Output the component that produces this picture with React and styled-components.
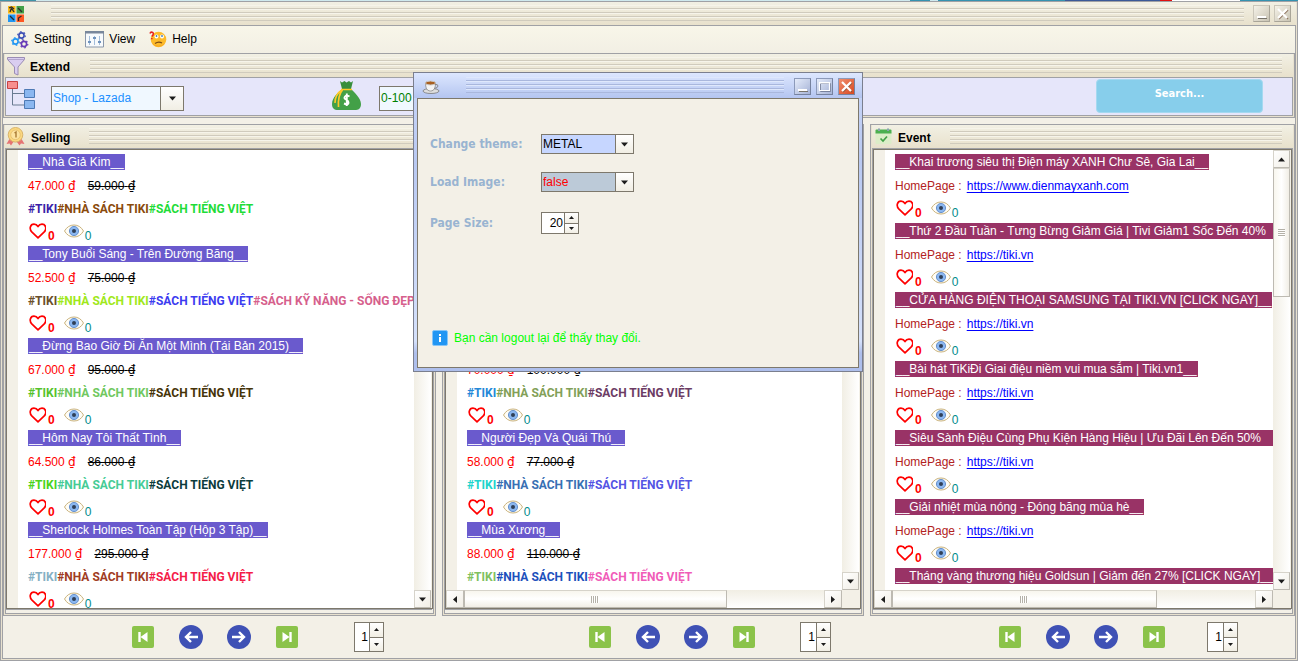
import React from 'react';
import styled, { createGlobalStyle, css } from 'styled-components';

const line = '#a0a1a5';
const dark = '#7d786c';
const panel = '#f3f0e7';
const sans = '"Liberation Sans", Arial, sans-serif';
const wide = '"DejaVu Sans Condensed", "DejaVu Sans", sans-serif';

const GlobalStyle = createGlobalStyle`
  * { box-sizing: border-box; }
  body { margin: 0; background: ${panel}; font: 12px/23px ${sans}; color: #000; }
  button, select, input { font: inherit; margin: 0; padding: 0; border: 0; border-radius: 0; color: inherit; }
  svg { display: block; flex: none; }
`;

const Desktop = styled.div`
  height: 100vh;
  min-height: 480px;
  display: flex;
  flex-direction: column;
  overflow: hidden;
`;

const DesktopEdge = styled.div`
  flex: none;
  height: 1px;
  background: linear-gradient(90deg, #3f93a8 0 36px, #cfe9ee 36px 910px, #3592b0 910px 930px, #cfe9ee 930px 938px, #3592b0 938px 1065px, #3b5998 1065px 1160px, #e01010 1160px 1172px, #fff 1172px 1240px, #3592b0 1240px);
`;

const Frame = styled.div`
  flex: 1;
  min-height: 0;
  display: flex;
  flex-direction: column;
  border: 1px solid ${line};
  padding: 0 1px 1px;
  background: #e8e1cf;
`;

const TitleRow = styled.header`
  flex: none;
  display: flex;
  align-items: center;
  height: 23px;
  padding-left: 1px;
  background: linear-gradient(#f2f0e4, #e8e1cc);
`;

const MainTitle = styled(TitleRow)`
  padding: 0 5px;
  gap: 4px;
`;

const Stripes = styled.div`
  flex: 1;
  height: 16px;
  margin: 0 ${(p) => p.$end}px ${(p) => (p.$blue ? 4 : 2)}px ${(p) => p.$start}px;
  background: repeating-linear-gradient(
    ${(p) => (p.$blue ? '#dfe8fc 0 1px, transparent 1px 3px, #a9b7dd 3px 4px' : '#f6f4ea 0 1px, transparent 1px 3px, #d0cbbd 3px 4px')}
  );
`;

const Inner = styled.div`
  flex: 1;
  min-height: 0;
  display: flex;
  flex-direction: column;
  border: 1px solid ${line};
  background: ${panel};
`;

const MenuBar = styled.nav`
  flex: none;
  height: 27px;
  display: flex;
  align-items: center;
  gap: 14px;
  padding-left: 8px;
  background: linear-gradient(#f8f6e9, #f2efe4);
`;

const MenuItem = styled.button`
  display: flex;
  align-items: center;
  gap: 5px;
  background: none;
`;

const CaptionButton = styled.button`
  flex: none;
  width: 17px;
  height: 17px;
  border: 1px solid;
  border-color: ${(p) => (p.$blue ? '#8c9aba #76829f #76829f #8c9aba' : '#cbc7ba #a9a598 #a9a598 #cbc7ba')};
  background: ${(p) =>
    p.$close ? 'linear-gradient(135deg, #f09070, #d84820)'
      : p.$blue ? 'linear-gradient(135deg, #e4ebfa, #a6b3d6)'
        : 'linear-gradient(135deg, #f5f2e8, #c9c4b4)'};
`;

const Group = styled.section`
  display: flex;
  flex-direction: column;
  min-width: 0;
  min-height: 0;
  border: 1px solid ${line};
  padding: 0 1px 1px;
  background: #e8e1cf;
`;

const ExtendGroup = styled(Group)`
  flex: none;
  margin-bottom: 6px;
`;

const GroupTitle = styled.h2`
  flex: none;
  margin: 0 0 0 ${(p) => p.$gap}px;
  padding-top: 3px;
  font-size: 12px;
  line-height: 20px;
`;

const FilterBar = styled.form`
  display: flex;
  align-items: center;
  height: 39px;
  border: 1px solid ${line};
  background: #e6e6fa;
  padding: 0 29px 2px 1px;
`;

const ComboFrame = styled.div`
  flex: none;
  display: flex;
  width: ${(p) => p.$width}px;
  height: ${(p) => p.$height}px;
  border: 1px solid ${dark};
  margin-left: ${(p) => p.$left || 0}px;
  margin-top: ${(p) => (p.$left ? 5 : 0)}px;
`;

const ComboSelect = styled.select`
  appearance: none;
  flex: 1;
  min-width: 0;
  padding-left: 1px;
  line-height: normal;
  color: ${(p) => p.$color};
  background: ${(p) => p.$bg};
`;

const ComboArrow = styled.span`
  flex: none;
  width: ${(p) => p.$width}px;
  display: grid;
  place-items: center;
  border-left: 1px solid ${dark};
  background: linear-gradient(#fff, #f1eee4);
`;

const BagBox = styled.div`
  flex: none;
  margin-left: 147px;
`;

const SearchButton = styled.button`
  width: 167px;
  height: 34px;
  margin-left: auto;
  padding-bottom: 4px;
  border: 1px solid #a5d9f0;
  border-radius: 4px;
  background: #87ceeb;
  color: #fff;
  font: bold 11px ${wide};
`;

const Columns = styled.main`
  flex: 1;
  min-height: 0;
  display: grid;
  grid-template-columns: 433fr 422fr 425fr;
  grid-template-rows: minmax(0, 1fr) 42px;
  column-gap: 6px;
`;

const Body = styled.div`
  flex: 1;
  min-height: 0;
  display: flex;
  border: 1px solid ${line};
  padding-bottom: 4px;
  background: ${panel};
`;

const Pane = styled.div`
  flex: 1;
  min-width: 0;
  display: grid;
  grid-template-columns: minmax(0, 1fr) 17px;
  grid-template-rows: minmax(0, 1fr) auto;
  border: solid ${dark};
  border-width: 1px 0 1px 1px;
  box-shadow: 1px 0 0 ${dark}, 0 1px 0 ${line};
  margin-right: 1px;
  padding-right: 1px;
  background: ${panel};
`;

const ItemList = styled.ul`
  margin: 0 0 0 11px;
  padding: 1px 0 0 10px;
  overflow: hidden;
  background: #fff;
  list-style: none;
  white-space: nowrap;
`;

const BlankItem = styled.li`
  height: 92px;
`;

const Line = styled.div`
  display: flex;
  align-items: center;
  height: 23px;
  padding-top: 2px;
`;

const ReactionLine = styled(Line)`
  padding: 0 0 2px;
`;

const Mark = styled.span`
  height: 16px;
  padding: 0 1px;
  margin-bottom: 3px;
  line-height: 17px;
  color: #fff;
  background: ${(p) => p.$bg};
`;

const Price = styled.span`
  color: #f00;
  margin-right: 12px;
`;

const Currency = styled.span`
  font-family: "DejaVu Sans", sans-serif;
`;

const Tag = styled.b`
  font-family: Roboto, ${sans};
  color: ${(p) => p.$color};
`;

const HomeLabel = styled.span`
  color: #b22222;
  margin-right: 5px;
`;

const HomeLink = styled.a`
  color: #00f;
  text-underline-offset: 2px;
`;

const Count = styled.span`
  align-self: flex-end;
  line-height: 14px;
  color: ${(p) => p.$color};
  font-weight: ${(p) => (p.$bold ? 'bold' : 'normal')};
  margin: ${(p) => (p.$bold ? '0 9px -2px 2px' : '0 0 -2px 1px')};
`;

const Scroll = styled.div`
  display: flex;
  flex-direction: ${(p) => (p.$across ? 'row' : 'column')};
  background: linear-gradient(${(p) => (p.$across ? '180deg' : '90deg')}, #f1eee4, #fff);
  ${(p) => p.$across && css`height: 18px;`}
`;

const ScrollButton = styled.button`
  flex: none;
  width: 18px;
  height: 18px;
  max-width: 100%;
  display: grid;
  place-items: center;
  border: 1px solid #bdbab2;
  border-top-color: #d6d3ca;
  border-left-color: #d6d3ca;
  background: linear-gradient(135deg, #fff, #f1eee6);
`;

const Thumb = styled.div`
  flex: ${(p) => p.$grow} 1 0;
  display: grid;
  place-items: center;
  border: 1px solid #bdbab2;
  border-top-color: #d6d3ca;
  background: linear-gradient(${(p) => (p.$across ? '180deg' : '90deg')}, #f8f6ee, #fff, #f1eee6);
`;

const Space = styled.div`
  flex: ${(p) => p.$grow} 1 0;
`;

const Grip = styled.i`
  width: ${(p) => (p.$across ? 8 : 7)}px;
  height: ${(p) => (p.$across ? 7 : 8)}px;
  background: repeating-linear-gradient(${(p) => (p.$across ? '90deg' : '180deg')}, #b4b1a8 0 1px, #fff 1px 2px);
`;

const Pager = styled.footer`
  display: flex;
  align-items: center;
  gap: 24px;
  padding-left: ${(p) => p.$left}px;
`;

const PageButton = styled.button`
  background: none;
`;

const SpinFrame = styled.div`
  display: flex;
  flex: none;
  width: ${(p) => p.$width}px;
  height: ${(p) => p.$height}px;
  margin-left: ${(p) => p.$left || 0}px;
  border: 1px solid ${dark};
  background: #fff;
`;

const SpinInput = styled.input`
  flex: 1;
  width: 0;
  min-width: 0;
  padding-right: 1px;
  text-align: right;
  background: #fff;
`;

const SpinButtons = styled.div`
  flex: none;
  width: 14px;
  display: flex;
  flex-direction: column;
  border-left: 1px solid ${dark};
`;

const SpinButton = styled.button`
  flex: 1;
  min-height: 0;
  display: grid;
  place-items: center;
  background: linear-gradient(#fff, #f1eee4);
  & + & { border-top: 1px solid ${dark}; }
`;

const DialogWindow = styled.div`
  position: absolute;
  left: 413px;
  top: 72px;
  width: 450px;
  height: 300px;
  display: flex;
  flex-direction: column;
  border: 1px solid #7b7f8e;
  padding: 0 3px 3px;
  background: linear-gradient(#c9d6f8, #b9c9f2 30%, #d5e1fb 90%, #aebfec 94%);
`;

const DialogTitle = styled.header`
  flex: none;
  display: flex;
  align-items: center;
  gap: 5px;
  height: 25px;
  margin: 0 -3px;
  padding: 2px 7px 0 8px;
  background: linear-gradient(#dde7fe, #b4c5f1);
`;

const DialogBody = styled.form`
  flex: 1;
  display: flex;
  flex-direction: column;
  border: 1px solid ${dark};
  padding: 35px 12px 21px;
  background: ${panel};
`;

const FieldGrid = styled.div`
  display: grid;
  grid-template-columns: 111px auto;
  grid-template-rows: 20px 20px 26px;
  justify-content: start;
  align-items: center;
  row-gap: 18px;
`;

const FieldLabel = styled.label`
  font: bold 12px/20px ${wide};
  color: #99b4d1;
`;

const Notice = styled.p`
  display: flex;
  align-items: center;
  gap: 6px;
  margin: auto 0 0 2px;
  line-height: 16px;
  color: #0f0;
`;

const arrows = {
  down: 'M0 1.500h7L3.500 5.500z',
  up: 'M0 5.500h7L3.500 1.500z',
  left: 'M5 0v7L1 3.500z',
  right: 'M1 0v7l4-3.500z',
};

function Arrow({ dir, size = 7 }) {
  return (
    <svg width={size} height={size} viewBox="0 0 7 7" aria-hidden="true">
      <path d={arrows[dir]} fill="#1c1c1c" />
    </svg>
  );
}

function AppIcon() {
  return (
    <svg width="18" height="18" viewBox="0 0 18 18" aria-hidden="true">
      <path d="M1 1h7.500v7.500H1z" fill="#fbb917" /><path d="M9.500 1H17v7.500H9.500z" fill="#43a047" />
      <path d="M1 9.500h7.500V17H1z" fill="#2196f3" /><path d="M9.500 9.500H17V17H9.500z" fill="#ff5722" />
      <path d="M2 3l2.500-1L7 4M4.500 3L3 7m2-3l2 3M11 3l4 4M3 11l4 4M11.500 16v-3l3-2" stroke="#2b2b2b" strokeWidth="1.300" fill="none" />
    </svg>
  );
}

function Gear({ x, y, color }) {
  return (
    <g transform={`translate(${x} ${y})`} fill="none" stroke={color}>
      <circle r="2.600" strokeWidth="1.600" />
      <circle r="3.800" strokeWidth="1.200" strokeDasharray="1.600 2.380" />
    </g>
  );
}

function GearsIcon() {
  return (
    <svg width="18" height="18" viewBox="0 0 18 18" aria-hidden="true">
      <Gear x={10.500} y={4.500} color="#3f51b5" />
      <Gear x={4.500} y={10.500} color="#2196f3" />
      <Gear x={13} y={13} color="#673ab7" />
    </svg>
  );
}

function SlidersIcon() {
  return (
    <svg width="19" height="17" viewBox="0 0 19 17" aria-hidden="true">
      <path d="M.5.500h18v15.500H.5z" fill="#f7fafc" stroke="#8a98ab" />
      <path d="M0 0h19v2.500H0z" fill="#78879b" />
      <path d="M4.500 5v9M9.500 5v9M14.500 5v9" stroke="#a4bedb" />
      <path d="M3 10h3v2H3zM8 6h3v2H8zM13 10h3v2h-3z" fill="#6f93bd" />
    </svg>
  );
}

function PuzzledIcon() {
  return (
    <svg width="18" height="17" viewBox="0 0 18 17" aria-hidden="true">
      <circle cx="9.500" cy="8.500" r="7.800" fill="#fdbb2b" />
      <path d="M3 12a7.800 7.800 0 0 0 13 0 9 9 0 0 1-13 0z" fill="#f5a01d" />
      <circle cx="7.500" cy="5.500" r="2" fill="#fff" /><circle cx="13" cy="5.500" r="2" fill="#fff" />
      <circle cx="7.500" cy="5" r=".9" fill="#3b7bb8" /><circle cx="13" cy="5" r=".9" fill="#3b7bb8" />
      <path d="M6 12.500q3.500-2.500 7-.5" stroke="#7a4b16" fill="none" strokeWidth="1.200" />
      <path d="M1 2.500Q1.500.8 3.200 1.200T4 4L2.800 5.500M2.800 7v1.200" stroke="#e62020" strokeWidth="1.500" fill="none" />
    </svg>
  );
}

function FunnelIcon() {
  return (
    <svg width="20" height="20" viewBox="0 0 20 20" aria-hidden="true">
      <path d="M1.500 1.500h17v2L12 11v8l-3.500-1.500V11L1.500 3.500z" fill="#d9cdf0" stroke="#9a8cb4" />
      <path d="M1.500 3.500h17" stroke="#b3a5cd" />
    </svg>
  );
}

function TreeIcon() {
  return (
    <svg width="29" height="29" viewBox="0 0 29 29" aria-hidden="true">
      <path d="M5.500 8v16H17M5.500 12.500H17" stroke="#697b91" fill="none" />
      <path d="M.5.500h10v7H.5z" fill="#f78f8f" stroke="#c74343" />
      <path d="M17.500 8.500h10v8h-10zM17.500 19.500h10v8h-10z" fill="#8bb7f0" stroke="#4e7ab5" />
    </svg>
  );
}

function MoneyBagIcon() {
  return (
    <svg width="31" height="31" viewBox="0 0 31 31" aria-hidden="true">
      <path d="M9 1l2 1.500L13.500 1l2 1.500L18 1l2 1.500L22 1l-2 8h-9z" fill="#388e3c" />
      <path d="M11 9h9c3 3 10 9 10 15 0 5-3 6-6 6H7c-4 0-6-2-6-6C1 17 8 12 11 9z" fill="#43a047" />
      <path d="M10 9.500h11M11 10C6 13 4 18 4 23M11.500 10C8 14 7 20 7.500 27" stroke="#ffc928" strokeWidth="1.600" fill="none" />
      <path d="M18.500 16.500q-3-1.800-4.500 0t1 3 2.500 3.500-4.500.5M15.800 13.500v12.500" stroke="#fff" strokeWidth="1.900" fill="none" />
    </svg>
  );
}

function MedalIcon() {
  return (
    <svg width="19" height="19" viewBox="0 0 19 19" aria-hidden="true">
      <path d="M4 11l-3.500 6 3-.5L5 18.500l4-6 4.500 6 1.500-2 3.500.5L15 11z" fill="#e57373" />
      <circle cx="9.500" cy="7.800" r="7.300" fill="#fbd87f" stroke="#d9b36a" />
      <circle cx="9.500" cy="7.800" r="4.800" fill="#fde3a0" stroke="#e3bb6b" strokeWidth=".8" />
      <path d="M8.500 6l1.500-1v5.500" stroke="#a97b35" strokeWidth="1.400" fill="none" />
    </svg>
  );
}

function CalendarIcon() {
  return (
    <svg width="19" height="17" viewBox="-2 0 19 17" aria-hidden="true">
      <path d="M.5 4h16v11q0 1-1 1h-14q-1 0-1-1z" fill="#dcedc8" />
      <path d="M.5 5.500v-3q0-1 1-1h14q1 0 1 1v3z" fill="#4caf50" />
      <path d="M4 .5v2.500M13 .5v2.500" stroke="#8aa3ae" strokeWidth="2" />
      <path d="M5.500 10.500l2.500 2.500 4-4.500" stroke="#43a047" strokeWidth="1.700" fill="none" />
    </svg>
  );
}

function CoffeeIcon() {
  return (
    <svg width="18" height="14" viewBox="0 0 18 14" aria-hidden="true">
      <ellipse cx="9" cy="11" rx="8" ry="2.500" fill="#dedede" stroke="#777" strokeWidth=".8" />
      <path d="M3.500 3h10c0 4-1 8-5 8s-5-4-5-8z" fill="#f4f4f4" stroke="#888" strokeWidth=".8" />
      <path d="M13 4.500q3-.5 3 1.500t-4 2.500" stroke="#888" fill="none" />
      <ellipse cx="8.500" cy="3" rx="5" ry="2" fill="#a85f20" stroke="#ccc" />
    </svg>
  );
}

function HeartIcon() {
  return (
    <svg width="18" height="16" viewBox="0 0 18 16" aria-hidden="true">
      <path d="M10 14.800L4 9.200C.8 6 2.200 1.200 6 1.200c2 0 3.200 1 4 2.300.8-1.300 2-2.300 4-2.300 3.800 0 5.200 4.800 2 8z" fill="none" stroke="#f00" strokeWidth="1.700" strokeLinejoin="round" />
    </svg>
  );
}

function EyeIcon() {
  return (
    <svg width="20" height="14" viewBox="0 0 20 14" aria-hidden="true">
      <path d="M.5 7Q4 1 10 1t9.500 6Q16 13 10 13T.5 7z" fill="#fffdf6" stroke="#c9b27c" />
      <circle cx="10" cy="7" r="4.600" fill="#8bb7f0" stroke="#5f8bc9" strokeWidth=".9" />
      <circle cx="10" cy="7" r="2" fill="#2f3f57" />
    </svg>
  );
}

function InfoIcon() {
  return (
    <svg width="16" height="16" viewBox="0 0 16 16" aria-hidden="true">
      <rect x=".5" y=".5" width="15" height="15" rx="1.500" fill="#2196f3" stroke="#86c5f7" />
      <path d="M8 4v2M8 7v5" stroke="#fff" strokeWidth="2" />
    </svg>
  );
}

const pageShapes = {
  first: <><rect x="1" y="1" width="22" height="22" rx="2" fill="#8bc34a" /><path d="M8.500 7v10" stroke="#fff" strokeWidth="2.400" /><path d="M16.500 7v10l-7-5z" fill="#fff" /></>,
  prev: <><circle cx="12" cy="12" r="12" fill="#3f51b5" /><path d="M19 12H7M12 7l-5 5 5 5" stroke="#fff" strokeWidth="2.400" fill="none" /></>,
  next: <><circle cx="12" cy="12" r="12" fill="#3f51b5" /><path d="M5 12h12M12 7l5 5-5 5" stroke="#fff" strokeWidth="2.400" fill="none" /></>,
  last: <><rect x="1" y="1" width="22" height="22" rx="2" fill="#8bc34a" /><path d="M15.500 7v10" stroke="#fff" strokeWidth="2.400" /><path d="M7.500 7v10l7-5z" fill="#fff" /></>,
};

function Combo({ id, label, value, width, height, arrow, color, bg, left }) {
  return (
    <ComboFrame $width={width} $height={height} $left={left}>
      <ComboSelect id={id} aria-label={label} defaultValue={value} $color={color} $bg={bg}>
        <option>{value}</option>
      </ComboSelect>
      <ComboArrow $width={arrow}><Arrow dir="down" /></ComboArrow>
    </ComboFrame>
  );
}

function Spinner({ id, label, value, width, height, left }) {
  return (
    <SpinFrame $width={width} $height={height} $left={left}>
      <SpinInput id={id} aria-label={label} defaultValue={value} />
      <SpinButtons>
        <SpinButton type="button" aria-label="Increase"><Arrow dir="up" size={5} /></SpinButton>
        <SpinButton type="button" aria-label="Decrease"><Arrow dir="down" size={5} /></SpinButton>
      </SpinButtons>
    </SpinFrame>
  );
}

function Reactions() {
  return (
    <ReactionLine>
      <HeartIcon />
      <Count $color="#f00" $bold>0</Count>
      <EyeIcon />
      <Count $color="#008b8b">0</Count>
    </ReactionLine>
  );
}

function Product({ title, price, old, tags }) {
  if (!price) return <BlankItem />;
  return (
    <li>
      <Line>{title && <Mark $bg="#6a5acd">__{title}__</Mark>}</Line>
      <Line>
        <Price>{price} <Currency>₫</Currency></Price>
        <s>{old} <Currency>₫</Currency></s>
      </Line>
      <Line>{tags.map(([text, color]) => <Tag key={text} $color={color}>#{text}</Tag>)}</Line>
      <Reactions />
    </li>
  );
}

function Event({ title, href }) {
  return (
    <li>
      <Line><Mark $bg="#993366">__{title}__</Mark></Line>
      <Line><HomeLabel>HomePage :</HomeLabel><HomeLink href={href}>{href}</HomeLink></Line>
      <Reactions />
    </li>
  );
}

function bookTags(a, b, c) {
  return [['TIKI', a], ['NHÀ SÁCH TIKI', b], ['SÁCH TIẾNG VIỆT', c]];
}

const selling = [
  { title: 'Nhà Giả Kim', price: '47.000', old: '59.000', tags: bookTags('#3b1fa8', '#8a4a0c', '#1fdc38') },
  { title: 'Tony Buổi Sáng - Trên Đường Băng', price: '52.500', old: '75.000', tags: [...bookTags('#6b4f2a', '#a0e81c', '#3c3cf0'), ['SÁCH KỸ NĂNG - SỐNG ĐẸP', '#d6608c']] },
  { title: 'Đừng Bao Giờ Đi Ăn Một Mình (Tái Bản 2015)', price: '67.000', old: '95.000', tags: bookTags('#56c22c', '#70c860', '#463408') },
  { title: 'Hôm Nay Tôi Thất Tình', price: '64.500', old: '86.000', tags: bookTags('#4ad41c', '#46cc96', '#0c3c3c') },
  { title: 'Sherlock Holmes Toàn Tập (Hộp 3 Tập)', price: '177.000', old: '295.000', tags: bookTags('#86b0c4', '#a03c24', '#f41c48') },
];

const middle = [
  {},
  {},
  { price: '70.000', old: '100.000', tags: bookTags('#2488d8', '#82a058', '#6c3c64') },
  { title: 'Người Đẹp Và Quái Thú', price: '58.000', old: '77.000', tags: bookTags('#20d4cc', '#3870b4', '#5454e4') },
  { title: 'Mùa Xương', price: '88.000', old: '110.000', tags: bookTags('#80c060', '#1c50bc', '#f05cb8') },
];

const events = [
  { title: 'Khai trương siêu thị Điện máy XANH Chư Sê, Gia Lai', href: 'https://www.dienmayxanh.com' },
  { title: 'Thứ 2 Đầu Tuần - Tưng Bừng Giảm Giá | Tivi Giảm1 Sốc Đến 40%\u00a0\u00a0\u00a0', href: 'https://tiki.vn' },
  { title: 'CỬA HÀNG ĐIỆN THOẠI SAMSUNG TẠI TIKI.VN [CLICK NGAY]', href: 'https://tiki.vn' },
  { title: 'Bài hát TiKiĐi Giai điệu niềm vui mua sắm | Tiki.vn1', href: 'https://tiki.vn' },
  { title: 'Siêu Sành Điệu Cùng Phụ Kiện Hàng Hiệu | Ưu Đãi Lên Đến 50%\u00a0\u00a0\u00a0\u00a0', href: 'https://tiki.vn' },
  { title: 'Giải nhiệt mùa nóng - Đóng băng mùa hè', href: 'https://tiki.vn' },
  { title: 'Tháng vàng thương hiệu Goldsun | Giảm đến 27% [CLICK NGAY]', href: 'https://tiki.vn' },
];

function Column({ title, icon, children, across }) {
  return (
    <Group>
      <TitleRow>
        {icon}
        <GroupTitle $gap={6}>{title}</GroupTitle>
        <Stripes $start={19} $end={11} />
      </TitleRow>
      <Body>
        <Pane>
          <ItemList>{children}</ItemList>
          <Scroll>
            <ScrollButton type="button" aria-label="Scroll up"><Arrow dir="up" /></ScrollButton>
            <Thumb $grow={128}><Grip /></Thumb>
            <Space $grow={276} />
            <ScrollButton type="button" aria-label="Scroll down"><Arrow dir="down" /></ScrollButton>
          </Scroll>
          {across && (
            <Scroll $across>
              <ScrollButton type="button" aria-label="Scroll left"><Arrow dir="left" /></ScrollButton>
              <Thumb $across $grow={262}><Grip $across /></Thumb>
              <Space $grow={98} />
              <ScrollButton type="button" aria-label="Scroll right"><Arrow dir="right" /></ScrollButton>
            </Scroll>
          )}
        </Pane>
      </Body>
    </Group>
  );
}

function PagerBar({ left, gap, width }) {
  return (
    <Pager $left={left}>
      {Object.keys(pageShapes).map((name) => (
        <PageButton key={name} type="button" aria-label={`${name} page`}>
          <svg width="24" height="24" viewBox="0 0 24 24" aria-hidden="true">{pageShapes[name]}</svg>
        </PageButton>
      ))}
      <Spinner label="Page" value="1" width={width} height={30} left={gap} />
    </Pager>
  );
}

function MinimizeGlyph() {
  return <svg width="15" height="15" viewBox="0 0 15 15" aria-hidden="true"><path d="M4 12.500h9" stroke="#77736a" /><path d="M3 11h9" stroke="#fff" strokeWidth="2" /></svg>;
}

function MaximizeGlyph() {
  return <svg width="15" height="15" viewBox="0 0 15 15" aria-hidden="true"><path d="M3.500 4.500h10v8h-10z" fill="none" stroke="#77819c" /><path d="M2.500 3.500h10v8h-10zM2 4h11" fill="none" stroke="#fff" strokeWidth="1.200" /></svg>;
}

function CloseGlyph() {
  return <svg width="15" height="15" viewBox="0 0 15 15" aria-hidden="true"><path d="M4 4l9 9M13 4l-9 9" stroke="#77563f" strokeWidth="1.500" opacity=".7" /><path d="M3 3l9 9M12 3l-9 9" stroke="#fff" strokeWidth="2.200" /></svg>;
}

function SettingsDialog() {
  return (
    <DialogWindow role="dialog" aria-label="Settings">
      <DialogTitle>
        <CoffeeIcon />
        <Stripes $blue $start={21} $end={5} />
        <CaptionButton $blue type="button" aria-label="Minimize"><MinimizeGlyph /></CaptionButton>
        <CaptionButton $blue type="button" aria-label="Maximize"><MaximizeGlyph /></CaptionButton>
        <CaptionButton $blue $close type="button" aria-label="Close"><CloseGlyph /></CaptionButton>
      </DialogTitle>
      <DialogBody>
        <FieldGrid>
          <FieldLabel htmlFor="theme">Change theme:</FieldLabel>
          <Combo id="theme" value="METAL" width={93} height={20} arrow={18} color="#000" bg="#c6d6ff" />
          <FieldLabel htmlFor="images">Load Image:</FieldLabel>
          <Combo id="images" value="false" width={93} height={20} arrow={18} color="#f00" bg="#bccad8" />
          <FieldLabel htmlFor="size">Page Size:</FieldLabel>
          <Spinner id="size" value="20" width={38} height={22} />
        </FieldGrid>
        <Notice><InfoIcon />Bạn cần logout lại để thấy thay đổi.</Notice>
      </DialogBody>
    </DialogWindow>
  );
}

export default function App() {
  return (
    <Desktop>
      <GlobalStyle />
      <DesktopEdge />
      <Frame>
        <MainTitle>
          <AppIcon />
          <Stripes $start={22} $end={5} />
          <CaptionButton type="button" aria-label="Minimize"><MinimizeGlyph /></CaptionButton>
          <CaptionButton type="button" aria-label="Close"><CloseGlyph /></CaptionButton>
        </MainTitle>
        <Inner>
          <MenuBar>
            <MenuItem type="button"><GearsIcon />Setting</MenuItem>
            <MenuItem type="button"><SlidersIcon />View</MenuItem>
            <MenuItem type="button"><PuzzledIcon />Help</MenuItem>
          </MenuBar>
          <ExtendGroup>
            <TitleRow>
              <FunnelIcon />
              <GroupTitle $gap={4}>Extend</GroupTitle>
              <Stripes $start={20} $end={11} />
            </TitleRow>
            <FilterBar>
              <TreeIcon />
              <Combo label="Shop" value="Shop - Lazada" width={133} height={25} arrow={23} color="#1e90ff" bg="#f0f8ff" left={15} />
              <BagBox><MoneyBagIcon /></BagBox>
              <Combo label="Price" value="0-100" width={133} height={25} arrow={23} color="#008000" bg="#f0f8ff" left={17} />
              <SearchButton type="button">Search...</SearchButton>
            </FilterBar>
          </ExtendGroup>
          <Columns>
            <Column title="Selling" icon={<MedalIcon />}>
              {selling.map((p, i) => <Product key={i} {...p} />)}
            </Column>
            <Column title="" across>
              {middle.map((p, i) => <Product key={i} {...p} />)}
            </Column>
            <Column title="Event" icon={<CalendarIcon />} across>
              {events.map((e, i) => <Event key={i} {...e} />)}
            </Column>
            <PagerBar left={128} gap={31} width={30} />
            <PagerBar left={146} gap={20} width={31} />
            <PagerBar left={128} gap={17} width={31} />
          </Columns>
        </Inner>
      </Frame>
      <SettingsDialog />
    </Desktop>
  );
}
